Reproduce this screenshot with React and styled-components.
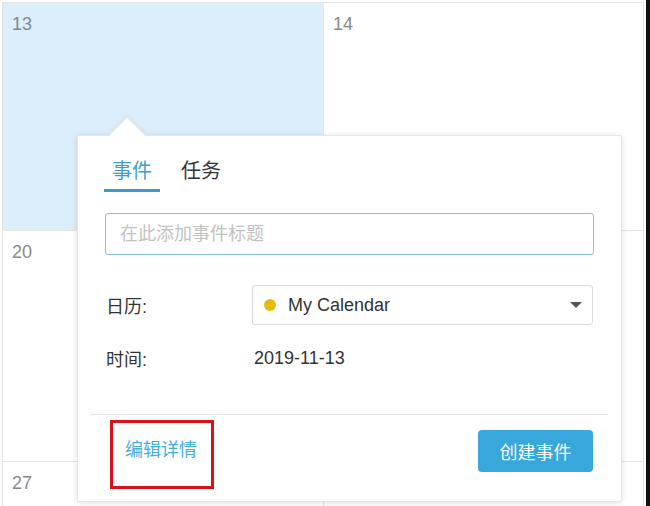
import styled, { createGlobalStyle } from "styled-components";

const GlobalStyle = createGlobalStyle`
  html, body {
    margin: 0;
    padding: 0;
    background: #fff;
    font-family: "Liberation Sans", "Noto Sans CJK SC", sans-serif;
  }
`;

const Page = styled.div`
  position: relative;
  width: 650px;
  height: 506px;
  overflow: hidden;
  display: flex;
`;

const Calendar = styled.div`
  margin: 2px 0 0 2px;
  display: grid;
  grid-template-columns: 321px 320px;
  grid-template-rows: 228px 231px 60px;
  border-top: 1px solid #e4e4e4;
  border-left: 1px solid #e4e4e4;
  align-self: flex-start;
`;

const Cell = styled.div`
  box-sizing: border-box;
  border-right: 1px solid #e4e4e4;
  border-bottom: 1px solid #e4e4e4;
  background: ${(p) => (p.$active ? "#dbeefa" : "#fff")};
  padding: 8px 9px;
  font-size: 18px;
  line-height: 26px;
  color: ${(p) => (p.$active ? "#7c8a96" : "#8a8a8a")};
`;

const Edge = styled.div`
  margin-left: auto;
  width: 4px;
  background: #111;
`;

const Popover = styled.div`
  position: absolute;
  left: 77px;
  top: 135px;
  width: 545px;
  box-sizing: border-box;
  background: #fff;
  border: 1px solid #e6e6e6;
  border-radius: 2px;
  box-shadow: 0 1px 6px rgba(0, 0, 0, 0.12);
`;

const Arrow = styled.div`
  position: absolute;
  left: 36px;
  top: -14px;
  width: 25px;
  height: 25px;
  background: #fff;
  transform: rotate(45deg);
  border-left: 1px solid #e6e6e6;
  border-top: 1px solid #e6e6e6;
  box-shadow: -2px -2px 4px rgba(0, 0, 0, 0.04);
`;

const Body = styled.div`
  position: relative;
  padding: 21px 28px 36px 26px;
`;

const Tabs = styled.div`
  display: flex;
  gap: 13px;
`;

const Tab = styled.div`
  padding: 0 8px 4px;
  font-size: 20px;
  line-height: 28px;
  color: ${(p) => (p.$active ? "#3d9fd0" : "#333")};
  border-bottom: 3px solid ${(p) => (p.$active ? "#3d9bc9" : "transparent")};
`;

const TitleInput = styled.input`
  display: block;
  box-sizing: border-box;
  width: 100%;
  height: 42px;
  margin: 21px 0 0 1px;
  padding: 0 14px;
  border: 1px solid #84bfd6;
  border-radius: 3px;
  font-family: inherit;
  font-size: 18px;
  color: #333;
  outline: none;
  &::placeholder {
    color: #c2c2c2;
  }
`;

const Field = styled.div`
  display: flex;
  align-items: center;
  height: 40px;
  margin-top: ${(p) => p.$gap}px;
  padding-left: 2px;
`;

const Label = styled.div`
  width: 148px;
  font-size: 18px;
  color: #333;
`;

const Value = styled.div`
  font-size: 18px;
  color: #333;
`;

const Select = styled.div`
  flex: 1;
  display: flex;
  align-items: center;
  box-sizing: border-box;
  height: 40px;
  margin-left: -2px;
  padding: 0 10px 0 11px;
  border: 1px solid #dcdcdc;
  border-radius: 3px;
  font-size: 18px;
  color: #333;
`;

const Dot = styled.span`
  width: 12px;
  height: 12px;
  border-radius: 50%;
  background: #e9ba0c;
  margin-right: 12px;
`;

const Caret = styled.span`
  margin-left: auto;
  width: 0;
  height: 0;
  border-left: 6px solid transparent;
  border-right: 6px solid transparent;
  border-top: 6px solid #555;
`;

const Divider = styled.div`
  height: 1px;
  margin: 0 13px 0 12px;
  background: #e4e4e4;
`;

const Footer = styled.div`
  display: flex;
  justify-content: space-between;
  align-items: flex-start;
  padding: 5px 28px 12px 32px;
`;

const Highlight = styled.div`
  border: 3px solid #d7131a;
  padding: 14px 14px 23px 12px;
`;

const LinkText = styled.a`
  display: block;
  font-size: 18px;
  line-height: 26px;
  color: #45aedc;
  text-decoration: none;
`;

const PrimaryButton = styled.button`
  margin-top: 10px;
  width: 115px;
  height: 42px;
  border: none;
  border-radius: 4px;
  background: #38a8dc;
  color: #fff;
  font-family: inherit;
  font-size: 18px;
  cursor: pointer;
`;

export default function App() {
  return (
    <>
      <GlobalStyle />
      <Page>
        <Calendar>
          <Cell $active>13</Cell>
          <Cell>14</Cell>
          <Cell>20</Cell>
          <Cell />
          <Cell>27</Cell>
          <Cell />
        </Calendar>
        <Edge />
        <Popover>
          <Arrow />
          <Body>
            <Tabs>
              <Tab $active>事件</Tab>
              <Tab>任务</Tab>
            </Tabs>
            <TitleInput placeholder="在此添加事件标题" />
            <Field $gap={30}>
              <Label>日历:</Label>
              <Select>
                <Dot />
                My Calendar
                <Caret />
              </Select>
            </Field>
            <Field $gap={13}>
              <Label>时间:</Label>
              <Value>2019-11-13</Value>
            </Field>
          </Body>
          <Divider />
          <Footer>
            <Highlight>
              <LinkText href="#">编辑详情</LinkText>
            </Highlight>
            <PrimaryButton>创建事件</PrimaryButton>
          </Footer>
        </Popover>
      </Page>
    </>
  );
}
